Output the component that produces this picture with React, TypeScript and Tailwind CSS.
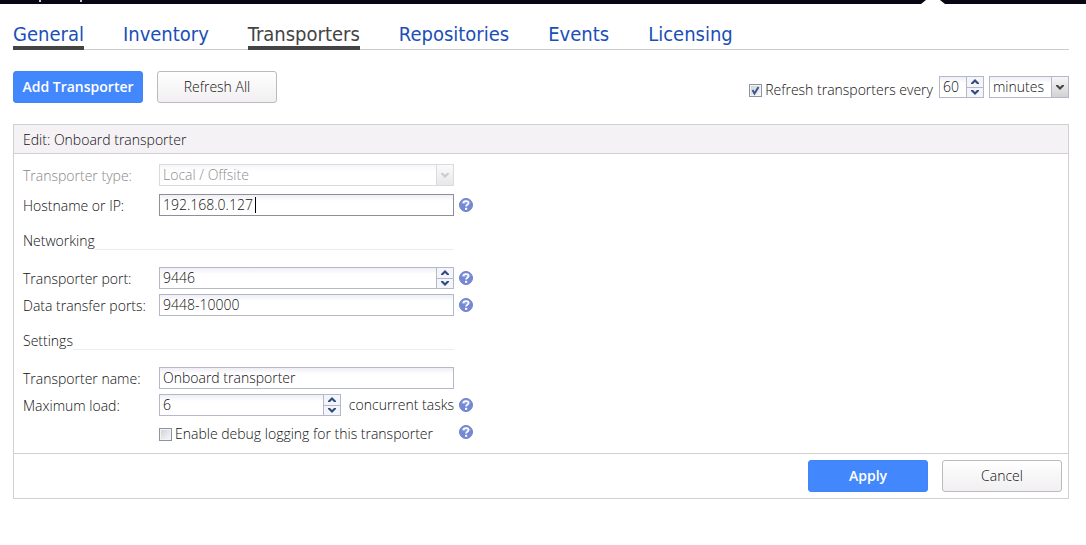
import { useState } from "react";
import type { ReactNode } from "react";
import clsx from "clsx";

const TABS = [
  { label: "General", underlined: true },
  { label: "Inventory" },
  { label: "Transporters", underlined: true, current: true },
  { label: "Repositories" },
  { label: "Events" },
  { label: "Licensing" },
];

const fieldClass =
  "h-[22px] min-w-0 border bg-linear-to-b from-[#eeeef5] via-white via-30% to-white px-[3px] text-[#111] outline-none";
const inputClass = `${fieldClass} pb-[2px]`;

export default function App() {
  const [autoRefresh, setAutoRefresh] = useState(true);
  const [unit, setUnit] = useState("minutes");
  const [host, setHost] = useState("192.168.0.127");
  const [ports, setPorts] = useState("9448-10000");
  const [name, setName] = useState("Onboard transporter");
  const [debug, setDebug] = useState(false);

  return (
    <div className="bg-white font-['Open_Sans','Noto_Sans',sans-serif] text-[14px] leading-5 font-light text-[#111]">
      <TopBar />

      <div className="pr-[17px] pl-[13px]">
        <nav className="mt-[17px] flex h-[29px] gap-[39px] border-b border-[#ccc] font-['DejaVu_Sans_Condensed','Noto_Sans',sans-serif] text-[20px] leading-[26px] font-normal">
          {TABS.map((tab) => (
            <a
              key={tab.label}
              href="#"
              aria-current={tab.current ? "page" : undefined}
              className={clsx(
                "h-[29px] border-b-4",
                tab.underlined ? "border-[#444]" : "border-transparent",
                tab.current ? "text-[#444]" : "text-[#1a4fb8]",
              )}
            >
              {tab.label}
            </a>
          ))}
        </nav>

        <div className="mt-[21px] flex items-center justify-between">
          <div className="flex gap-[14px]">
            <Button primary wide>
              Add Transporter
            </Button>
            <Button>Refresh All</Button>
          </div>
          <div className="flex items-center">
            <Checkbox
              id="auto-refresh"
              checked={autoRefresh}
              onChange={setAutoRefresh}
              label="Refresh transporters every"
            />
            <div className="ml-[6px] w-[45px]">
              <Spinner id="interval" ariaLabel="Refresh interval" initial={60} />
            </div>
            <div className="ml-[5px] w-20">
              <Select
                id="unit"
                ariaLabel="Interval unit"
                value={unit}
                onChange={setUnit}
                options={["minutes", "hours"]}
              />
            </div>
          </div>
        </div>

        <section className="mt-[21px] border border-[#d0d0d4]">
          <h2 className="h-[29px] border-b border-[#d0d0d4] bg-[#f5f2f6] px-[9px] leading-[29px]">
            Edit: Onboard transporter
          </h2>

          <form className="px-[9px] pt-[10px] pb-[9px]">
            <Row label="Transporter type:" id="type" disabled>
              <Select id="type" value="Local / Offsite" options={["Local / Offsite"]} disabled />
            </Row>
            <Row label="Hostname or IP:" id="host" help className="mt-2">
              <div className="relative flex">
                <input
                  id="host"
                  value={host}
                  onChange={(e) => setHost(e.target.value)}
                  className={clsx(inputClass, "w-full border-[#8f8f98]")}
                />
                {/* text cursor */}
                <span className="absolute top-[3px] left-24 h-4 w-px bg-black" />
              </div>
            </Row>

            <Heading>Networking</Heading>
            <Row label="Transporter port:" id="port" help>
              <Spinner id="port" initial={9446} />
            </Row>
            <Row label="Data transfer ports:" id="ports" help className="mt-[5px]">
              <input
                id="ports"
                value={ports}
                onChange={(e) => setPorts(e.target.value)}
                className={clsx(inputClass, "block w-full border-[#b5b8c8]")}
              />
            </Row>

            <Heading>Settings</Heading>
            <Row label="Transporter name:" id="name">
              <input
                id="name"
                value={name}
                onChange={(e) => setName(e.target.value)}
                className={clsx(inputClass, "block w-full border-[#b5b8c8]")}
              />
            </Row>
            <Row label="Maximum load:" id="load" help className="mt-[5px]">
              <div className="flex items-center justify-between">
                <div className="w-[182px]">
                  <Spinner id="load" initial={6} />
                </div>
                <span className="whitespace-nowrap">concurrent tasks</span>
              </div>
            </Row>
            <Row help className="mt-[3px]">
              <Checkbox
                id="debug"
                checked={debug}
                onChange={setDebug}
                label="Enable debug logging for this transporter"
              />
            </Row>
          </form>

          <div className="flex justify-end gap-[14px] border-t border-[#d0d0d4] p-[6px]">
            <Button primary>Apply</Button>
            <Button>Cancel</Button>
          </div>
        </section>
      </div>
    </div>
  );
}

function TopBar() {
  return (
    <header className="flex h-1 justify-between bg-[#060712]">
      <svg width="90" height="4" className="shrink-0" aria-hidden="true">
        <path d="M39 0h2v2h-2zM80 0h2v2h-2z" fill="#c9c9d2" />
      </svg>
      <svg width="166" height="4" className="shrink-0" aria-hidden="true">
        <path d="M1 4L6 0H20L25 4z" fill="#fff" />
      </svg>
    </header>
  );
}

interface ButtonProps {
  children: ReactNode;
  primary?: boolean;
  wide?: boolean;
}

function Button({ children, primary, wide }: ButtonProps) {
  return (
    <button
      type="button"
      className={clsx(
        "h-8 rounded-[3px] border whitespace-nowrap",
        wide ? "w-[130px]" : "w-[120px]",
        primary
          ? "border-[#4285f8] bg-[#4387fd] font-semibold text-white"
          : "border-[#bbb] bg-linear-to-b from-white to-[#f1eff1]",
      )}
    >
      {children}
    </button>
  );
}

interface RowProps {
  children: ReactNode;
  label?: string;
  id?: string;
  help?: boolean;
  disabled?: boolean;
  className?: string;
}

function Row({ children, label, id, help, disabled, className }: RowProps) {
  return (
    <div className={clsx("flex items-center", className)}>
      <div className="w-[136px] shrink-0">
        {label && (
          <label htmlFor={id} className={clsx("block pt-[2px]", disabled && "text-[#888]")}>
            {label}
          </label>
        )}
      </div>
      <div className="w-[295px]">{children}</div>
      {help && (
        <button type="button" aria-label="Help" className="ml-[5px]">
          <HelpIcon />
        </button>
      )}
    </div>
  );
}

function Heading({ children }: { children: ReactNode }) {
  return (
    <h3 className="mt-[15px] mb-[16px] flex w-[431px] items-end leading-5">
      <span>{children}</span>
      <span className="mb-px h-px flex-1 bg-[#ececf0]" />
    </h3>
  );
}

interface CheckboxProps {
  id: string;
  label: string;
  checked: boolean;
  onChange: (checked: boolean) => void;
}

function Checkbox({ id, label, checked, onChange }: CheckboxProps) {
  return (
    <div className="flex items-center gap-[3px]">
      <span className="relative mt-[6px] flex">
        <input
          id={id}
          type="checkbox"
          checked={checked}
          onChange={(e) => onChange(e.target.checked)}
          className="size-[13px] appearance-none border border-[#8c94a4] bg-linear-to-br from-[#cdd0d4] to-[#fafafa] shadow-[inset_0_0_0_1px_#f3f3f3]"
        />
        {checked && (
          <svg width="13" height="13" className="pointer-events-none absolute inset-0">
            <path d="M3.5 6L5.5 9.5L9.5 3" fill="none" stroke="#3d5590" strokeWidth="2" />
          </svg>
        )}
      </span>
      <label htmlFor={id} className="pt-[5px] whitespace-nowrap">
        {label}
      </label>
    </div>
  );
}

interface SpinnerProps {
  id: string;
  initial: number;
  ariaLabel?: string;
}

function Spinner({ id, initial, ariaLabel }: SpinnerProps) {
  const [value, setValue] = useState(initial);

  return (
    <div className="flex h-[22px]">
      <input
        id={id}
        aria-label={ariaLabel}
        value={value}
        onChange={(e) => setValue(Number(e.target.value) || 0)}
        className={clsx(inputClass, "flex-1 border-r-0 border-[#b5b8c8]")}
      />
      <div className="flex w-[18px] shrink-0 flex-col border border-[#b5b8c8] bg-[#f4f5fa]">
        <button
          type="button"
          aria-label="Increase"
          onClick={() => setValue(value + 1)}
          className="flex flex-1 items-center justify-center border-b border-[#b5b8c8]"
        >
          <Chevron up />
        </button>
        <button
          type="button"
          aria-label="Decrease"
          onClick={() => setValue(value - 1)}
          className="flex flex-1 items-center justify-center"
        >
          <Chevron />
        </button>
      </div>
    </div>
  );
}

function Chevron({ up }: { up?: boolean }) {
  return (
    <svg width="10" height="6" viewBox="0 0 10 6" fill="#2f4a7c" aria-hidden="true">
      <path d={up ? "M5 0L9 4V5H7L5 3L3 5H1V4z" : "M5 6L9 2V1H7L5 3L3 1H1V2z"} />
    </svg>
  );
}

interface SelectProps {
  id: string;
  value: string;
  options: string[];
  onChange?: (value: string) => void;
  ariaLabel?: string;
  disabled?: boolean;
}

function Select({ id, value, options, onChange, ariaLabel, disabled }: SelectProps) {
  return (
    <div className={clsx("relative flex", disabled && "opacity-50")}>
      <select
        id={id}
        aria-label={ariaLabel}
        value={value}
        disabled={disabled}
        onChange={(e) => onChange?.(e.target.value)}
        className={clsx(fieldClass, "w-full appearance-none border-[#b5b8c8] leading-5")}
      >
        {options.map((option) => (
          <option key={option}>{option}</option>
        ))}
      </select>
      <span
        className={clsx(
          "pointer-events-none absolute inset-y-0 right-0 flex w-[18px] items-center justify-center border border-[#b5b8c8] bg-linear-to-b from-[#f6f6f6] to-[#d2d2d2]",
          disabled ? "text-[#999]" : "text-[#444]",
        )}
      >
        <svg width="8" height="5" viewBox="0 0 8 5" fill="currentColor" aria-hidden="true">
          <path d="M0 0H2L4 2L6 0H8V1L4 5L0 1z" />
        </svg>
      </span>
    </div>
  );
}

function HelpIcon() {
  return (
    <svg width="14" height="14" viewBox="0 0 14 14" className="block" aria-hidden="true">
      <circle cx="7" cy="7" r="6.5" fill="#7488d4" stroke="#7083cc" />
      <path d="M2 5A5.5 5.5 0 0 1 12 5Q7 8 2 5z" fill="#8c9ee0" />
      <path
        d="M4.5 5.2C4.5 2.4 9.5 2.4 9.5 5.1C9.5 6.8 7.1 6.6 7.1 8.6"
        fill="none"
        stroke="#fff"
        strokeWidth="1.8"
      />
      <path d="M6 9.8h2.2v2H6z" fill="#fff" />
    </svg>
  );
}
